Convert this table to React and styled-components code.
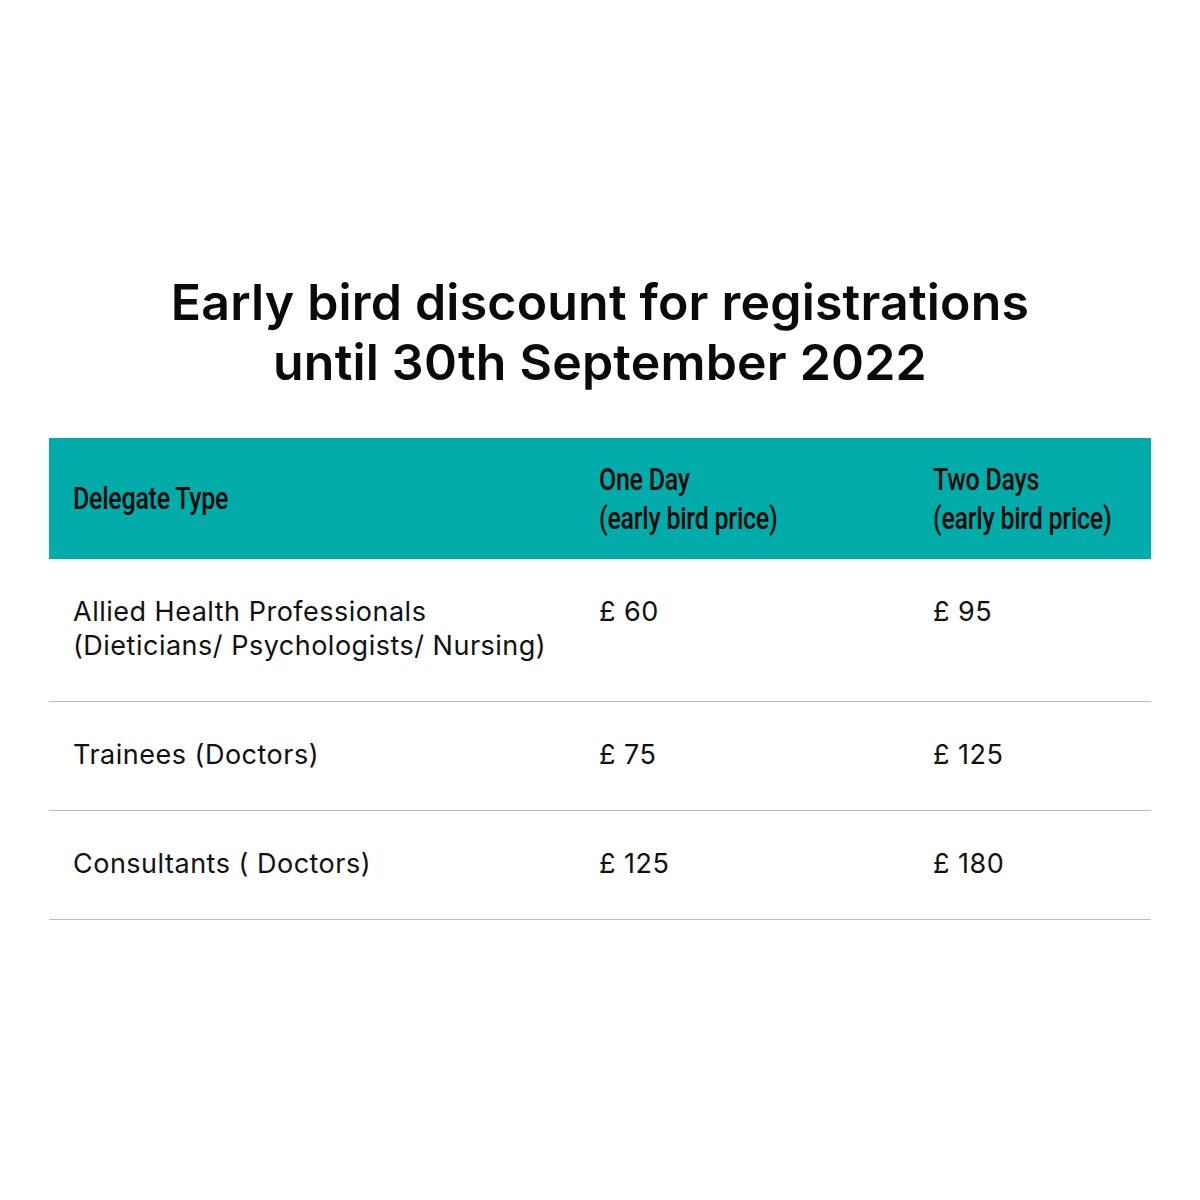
import React from 'react';
import styled, { createGlobalStyle } from 'styled-components';

const GlobalStyle = createGlobalStyle`
  html, body {
    margin: 0;
    padding: 0;
    background: #ffffff;
  }
  body {
    font-family: 'Inter', 'Open Sans', sans-serif;
    color: #111;
  }
`;

const rows = [
  {
    type: ['Allied Health Professionals', '(Dieticians/ Psychologists/ Nursing)'],
    one: '£ 60',
    two: '£ 95',
  },
  { type: ['Trainees (Doctors)'], one: '£ 75', two: '£ 125' },
  { type: ['Consultants ( Doctors)'], one: '£ 125', two: '£ 180' },
];

function App() {
  return (
    <Page>
      <GlobalStyle />
      <Title>
        Early bird discount for registrations
        <br />
        until 30th September 2022
      </Title>

      <PriceTable>
        <colgroup>
          <col style={{ width: 526 }} />
          <col style={{ width: 334 }} />
          <col />
        </colgroup>
        <thead>
          <tr>
            <HeadCell>
              <HeadLabel>Delegate Type</HeadLabel>
            </HeadCell>
            <HeadCell>
              <HeadLabel>
                One Day
                <br />
                (early bird price)
              </HeadLabel>
            </HeadCell>
            <HeadCell>
              <HeadLabel>
                Two Days
                <br />
                (early bird price)
              </HeadLabel>
            </HeadCell>
          </tr>
        </thead>
        <tbody>
          {rows.map((row) => (
            <tr key={row.type[0]}>
              <Cell>
                {row.type.map((line, i) => (
                  <React.Fragment key={line}>
                    {i > 0 && <br />}
                    {line}
                  </React.Fragment>
                ))}
              </Cell>
              <Cell>{row.one}</Cell>
              <Cell>{row.two}</Cell>
            </tr>
          ))}
        </tbody>
      </PriceTable>
    </Page>
  );
}

export default App;

const Page = styled.main`
  width: 1200px;
  height: 1200px;
  box-sizing: border-box;
  padding: 272px 49px 0;
  display: flex;
  flex-direction: column;
  align-items: center;
`;

const Title = styled.h1`
  margin: 0 0 46px;
  font-family: 'Inter', sans-serif;
  font-weight: 600;
  font-size: 50px;
  line-height: 60px;
  letter-spacing: 0.2px;
  text-align: center;
  color: #0a0a0a;
`;

const PriceTable = styled.table`
  width: 1102px;
  border-collapse: collapse;
  table-layout: fixed;
`;

const HeadCell = styled.th`
  background: #00aca9;
  padding: 0 24px;
  height: 121px;
  box-sizing: border-box;
  text-align: left;
  vertical-align: middle;
  white-space: nowrap;
`;

/* the reference uses a condensed face; none is installed, so narrow Roboto */
const HeadLabel = styled.span`
  display: inline-block;
  transform: scaleX(0.78);
  transform-origin: left center;
  font-family: 'Roboto', sans-serif;
  font-weight: 500;
  font-size: 32px;
  line-height: 39px;
  letter-spacing: -0.3px;
  color: #0a0a0a;
`;

const Cell = styled.td`
  padding: 36px 24px 38px;
  text-align: left;
  vertical-align: top;
  border-bottom: 1px solid #bcbcbc;
  font-family: 'Inter', sans-serif;
  font-weight: 400;
  font-size: 27px;
  line-height: 34px;
  letter-spacing: 0.5px;
  color: #111;
`;
